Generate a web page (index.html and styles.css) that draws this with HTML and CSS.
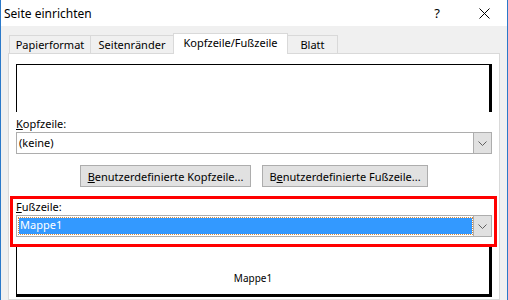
FILE: index.html
```html
<!DOCTYPE html>
<html lang="de">
<head>
  <meta charset="UTF-8">
  <title>Seite einrichten</title>
  <link rel="stylesheet" href="styles.css">
</head>
<body>

  <div class="window">
    <!-- Titelleiste -->
    <div class="titlebar">
      <span class="title">Seite einrichten</span>
      <span class="help">?</span>
      <span class="close">
        <svg width="11" height="11" viewBox="0 0 11 11"><path d="M0.5 0.5 L10.5 10.5 M10.5 0.5 L0.5 10.5" stroke="#000" stroke-width="1" fill="none"/></svg>
      </span>
    </div>

    <div class="client">
      <!-- Registerkarten -->
      <div class="tabs">
        <div class="tab tab-papier">Papierformat</div>
        <div class="tab tab-raender">Seitenränder</div>
        <div class="tab tab-kopf active">Kopfzeile/Fußzeile</div>
        <div class="tab tab-blatt">Blatt</div>
      </div>

      <div class="panel">
        <div class="preview preview-head"></div>

        <div class="field-label"><u>K</u>opfzeile:</div>
        <div class="combo">
          <span class="combo-value">(keine)</span>
          <span class="combo-btn"><svg width="9" height="5" viewBox="0 0 9 5"><path d="M0.5 0.5 L4.5 4.5 L8.5 0.5" stroke="#606060" fill="none"/></svg></span>
        </div>

        <div class="button-row">
          <button class="btn btn-kopf"><u>B</u>enutzerdefinierte Kopfzeile...</button>
          <button class="btn btn-fuss">B<u>e</u>nutzerdefinierte Fußzeile...</button>
        </div>

        <div class="highlight">
          <div class="field-label"><u>F</u>ußzeile:</div>
          <div class="combo">
            <span class="combo-value selected">Mappe1</span>
            <span class="combo-btn"><svg width="9" height="5" viewBox="0 0 9 5"><path d="M0.5 0.5 L4.5 4.5 L8.5 0.5" stroke="#606060" fill="none"/></svg></span>
          </div>
        </div>

        <div class="preview preview-foot">
          <span class="preview-text">Mappe1</span>
        </div>
      </div>
    </div>
  </div>

</body>
</html>
```

FILE: styles.css
```css
* {
  box-sizing: border-box;
}

body {
  margin: 0;
  font-family: 'Noto Sans', 'Liberation Sans', sans-serif;
  font-size: 11px;
  color: #000;
  background-color: #f0f0f0;
}

.window {
  width: 508px;
  height: 300px;
  overflow: hidden;
  border-left: 1px solid #2b79c9;
  border-right: 1px solid #2b79c9;
  background-color: #f0f0f0;
  display: flex;
  flex-direction: column;
}

.titlebar {
  height: 26px;
  flex: none;
  background-color: #fff;
  display: flex;
  align-items: center;
  padding-left: 3px;
}

.title {
  flex: 1;
  font-size: 12px;
  padding-top: 1px;
}

.help {
  width: 46px;
  text-align: center;
  font-size: 13px;
  margin-right: 1px;
}

.close {
  width: 46px;
  display: flex;
  justify-content: center;
  padding-top: 1px;
}

.client {
  flex: 1;
  padding: 7px 7px 0 7px;
  display: flex;
  flex-direction: column;
}

.tabs {
  height: 20px;
  display: flex;
  align-items: flex-end;
  padding-left: 1px;
}

.tab {
  height: 18px;
  border: 1px solid #d9d9d9;
  border-bottom: none;
  text-align: center;
  line-height: 17px;
  margin-left: -1px;
}

.tab:first-child {
  margin-left: 0;
}

.tab.active {
  height: 21px;
  margin-bottom: -1px;
  background-color: #fff;
  position: relative;
  line-height: 17px;
}

.tab-papier { width: 82px; }
.tab-raender { width: 84px; }
.tab-kopf { width: 115px; }
.tab-blatt { width: 51px; }

.panel {
  flex: 1;
  background-color: #fff;
  border: 1px solid #d9d9d9;
  padding: 0 7px;
}

.preview {
  border-color: #000;
  border-style: solid;
}

.preview-head {
  margin-top: 10px;
  height: 48px;
  border-width: 1px 3px 0 1px;
}

.field-label {
  line-height: 16px;
  margin-top: 4px;
}

.combo {
  height: 22px;
  border: 1px solid #adadad;
  display: flex;
  background-color: #fff;
}

.combo-value {
  flex: 1;
  padding-left: 2px;
  line-height: 19px;
}

.combo-value.selected {
  margin: 2px 1px 2px 2px;
  padding-left: 1px;
  line-height: 14px;
  background-color: #3399ff;
  color: #fff;
  outline: 1px dotted #d88a3c;
}

.combo-btn {
  width: 18px;
  background-color: #e1e1e1;
  border-left: 1px solid #adadad;
  display: flex;
  align-items: center;
  justify-content: center;
}

.button-row {
  margin-top: 11px;
  display: flex;
  justify-content: center;
  gap: 11px;
}

.btn {
  height: 22px;
  border: 1px solid #adadad;
  background-color: #e1e1e1;
  font-family: inherit;
  font-size: 11px;
  color: #000;
  padding: 0;
  white-space: nowrap;
}

.btn-kopf { width: 171px; }
.btn-fuss { width: 166px; }

.highlight {
  margin: 9px -5px 0 -6px;
  border: 3px solid #ff0000;
  padding: 0 2px 7px 3px;
}

.highlight .field-label {
  margin-top: 0;
}

.preview-foot {
  height: 50px;
  border-width: 0 3px 3px 1px;
  display: flex;
  align-items: flex-end;
  justify-content: center;
  padding-bottom: 9px;
}

.preview-text {
  font-size: 10px;
  line-height: 14px;
}
```
